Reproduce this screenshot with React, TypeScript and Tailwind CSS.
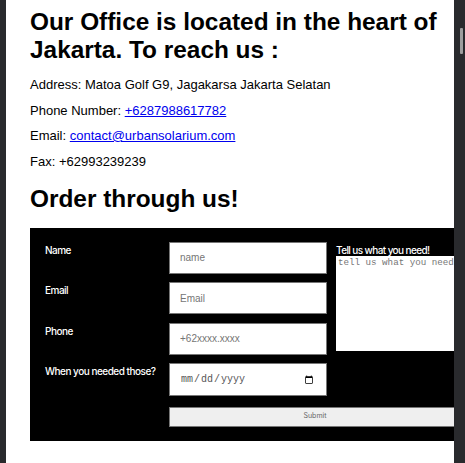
import React from "react";

export default function App() {
  const labelCls =
    "text-[10px] leading-[12px] text-white font-medium font-['Inter',sans-serif] tracking-[-0.05em] pt-[2px]";
  const inputCls =
    "w-[158px] h-[32px] bg-white border border-[#767676] px-[10px] text-[10px] text-black placeholder:text-[#757575] font-['Liberation_Sans',Arial,sans-serif] outline-none";
  return (
    <div className="w-[465px] h-[463px] bg-[#292a2d] flex overflow-hidden">
      <div className="w-[6px] shrink-0" />
      <div className="w-[448px] shrink-0 bg-white overflow-hidden h-full">
        <div className="pl-[24px] pt-[8px] font-['Liberation_Sans',Arial,sans-serif] text-black">
          <h1 className="text-[24.4px] leading-[28px] font-bold w-[424px]">
            Our Office is located in the heart of Jakarta. To reach us :
          </h1>
          <div className="mt-[13px] text-[13px] leading-[15px] flex flex-col gap-[10.5px]">
            <p>Address: Matoa Golf G9, Jagakarsa Jakarta Selatan</p>
            <p>
              Phone Number:{" "}
              <a href="#" className="text-[#0000ee] underline">
                +6287988617782
              </a>
            </p>
            <p>
              Email:{" "}
              <a href="#" className="text-[#0000ee] underline">
                contact@urbansolarium.com
              </a>
            </p>
            <p>Fax: +62993239239</p>
          </div>
          <h2 className="mt-[16px] text-[24.4px] leading-[28px] font-bold">Order through us!</h2>
          <div className="mt-[15px] bg-black w-[460px] pl-[15px] pt-[14px] pb-[14px] grid grid-cols-[124px_158px_9px_150px] grid-rows-[32px_32px_32px_33px_21.5px] gap-y-[8.67px]">
            <div className={labelCls}>Name</div>
            <input className={inputCls} placeholder="name" />
            <div />
            <div className="row-span-3 flex flex-col">
              <div className="text-[10px] leading-[12px] text-white font-medium font-['Inter',sans-serif] tracking-[-0.06em] mt-[2px]">
                Tell us what you need!
              </div>
              <textarea
                className="w-[150px] h-[95px] bg-white resize-none px-[2px] py-[1px] text-[9.2px] leading-[11px] font-['Liberation_Mono',monospace] placeholder:text-[#757575] outline-none"
                placeholder="tell us what you need"
              />
            </div>
            <div className={labelCls}>Email</div>
            <input className={inputCls} placeholder="Email" />
            <div />
            <div className={labelCls}>Phone</div>
            <input className={inputCls} placeholder="+62xxxx.xxxx" />
            <div />
            <div className={labelCls}>When you needed those?</div>
            <input
              type="date"
              className="w-[158px] h-[33px] bg-white border border-[#767676] px-[10px] text-[10px] text-[#555] font-['Liberation_Mono',monospace] outline-none"
            />
            <div className="col-span-2" />
            <div />
            <button className="col-span-3 mt-[1.5px] w-[300px] h-[20px] bg-[#efefef] border border-[#767676] text-[7px] text-[#666] font-['Inter',sans-serif] pr-[8px]">
              Submit
            </button>
          </div>
        </div>
      </div>
      <div className="flex-1 relative">
        <div className="absolute left-[6px] top-[28px] w-[3px] h-[26px] bg-[#9e9e9e] rounded-[1px]" />
      </div>
    </div>
  );
}
